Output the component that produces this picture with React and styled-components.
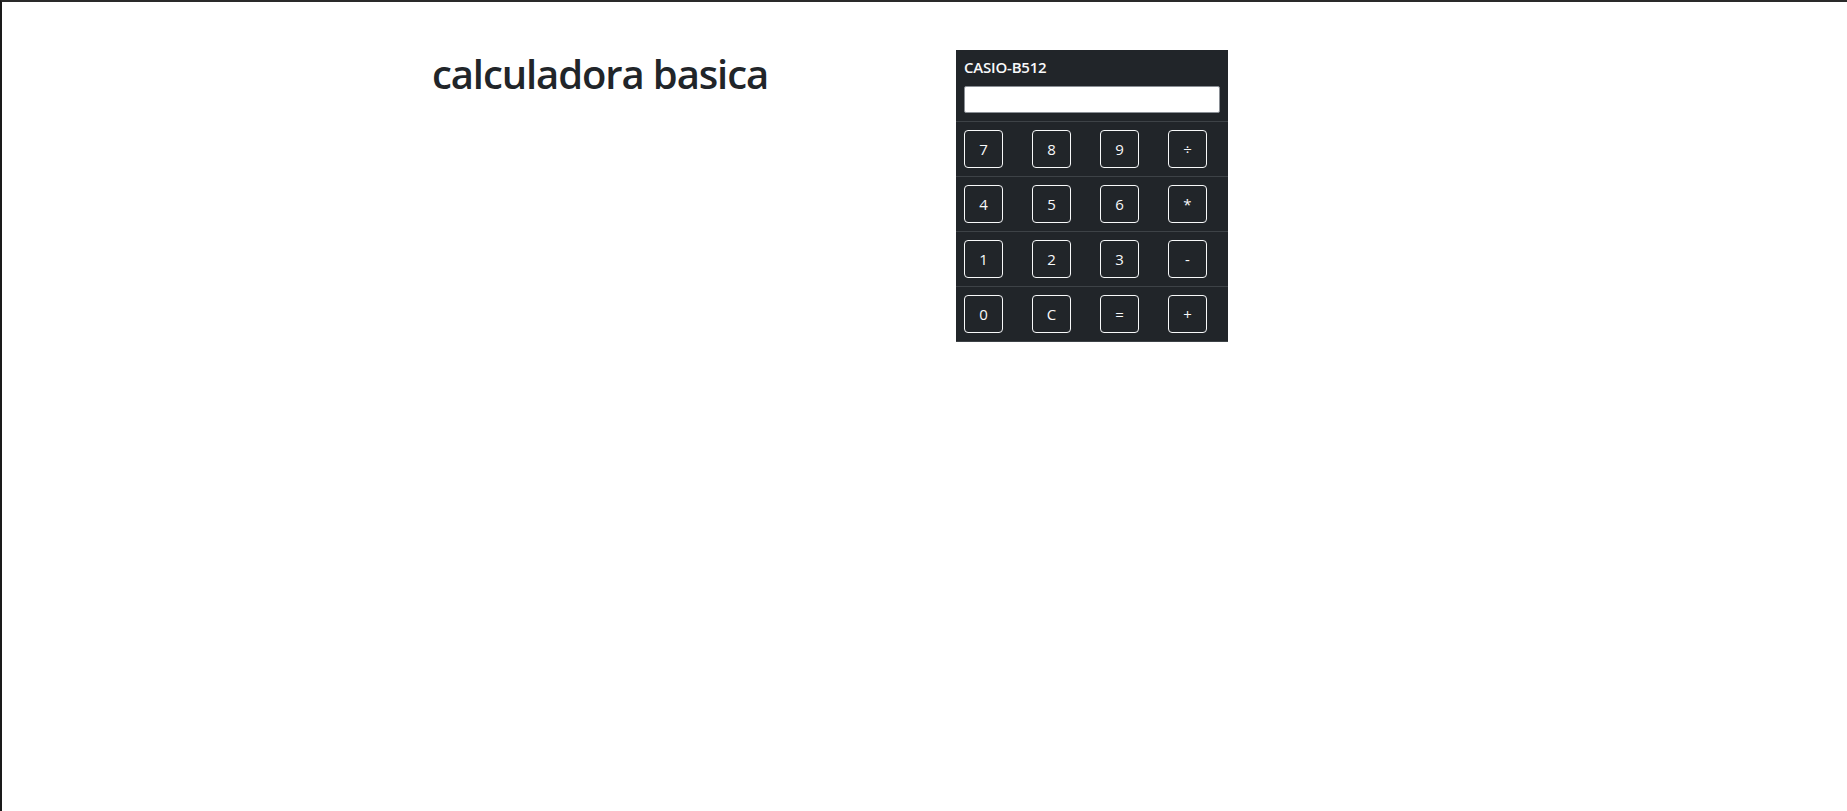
import React from "react";
import styled, { createGlobalStyle } from "styled-components";

const GlobalStyle = createGlobalStyle`
  html, body { margin: 0; padding: 0; background: #ffffff; }
  body { font-family: "Open Sans", "Noto Sans", sans-serif; color: #212529; }
  * { box-sizing: border-box; }
`;

const Frame = styled.div`
  min-height: 100vh;
  border-top: 2px solid #2a2a2a;
  border-left: 2px solid #1a1a1a;
  padding-top: 48px;
`;

const Row = styled.div`
  display: flex;
  align-items: flex-start;
  padding-left: 430px;
`;

const TitleCol = styled.div`
  width: 336px;
  text-align: center;
`;

const Title = styled.h1`
  margin: 0;
  font-size: 40px;
  font-weight: 600;
  line-height: 48px;
  letter-spacing: -1.1px;
  color: #212529;
  white-space: nowrap;
`;

const Card = styled.div`
  margin-left: 188px;
  width: 272px;
  background: #212529;
  color: #f8f9fa;
  border-bottom: 1px solid #3d4246;
`;

const Header = styled.div`
  padding: 8px;
  display: flex;
  flex-direction: column;
  gap: 9px;
`;

const Brand = styled.div`
  font-size: 15px;
  font-weight: 600;
  line-height: 19px;
  letter-spacing: -0.2px;
  color: #f8f9fa;
`;

const Display = styled.input`
  display: block;
  width: 256px;
  height: 27px;
  border: 1px solid #8a8f95;
  border-radius: 2px;
  background: #ffffff;
  font-family: inherit;
  font-size: 14px;
  padding: 2px 6px;
  outline: none;
`;

const KeyRow = styled.div`
  display: grid;
  grid-template-columns: repeat(4, 68px);
  border-top: 1px solid #3d4246;
  padding: 8px 0;
`;

const KeyCell = styled.div`
  padding-left: 8px;
`;

const Key = styled.button`
  width: 39px;
  height: 38px;
  padding: 0;
  background: transparent;
  border: 1px solid #f8f9fa;
  border-radius: 4px;
  color: #f8f9fa;
  font-family: "Open Sans", "Noto Sans", sans-serif;
  font-size: 15px;
  line-height: 1;
  cursor: pointer;
`;

const rows = [
  ["7", "8", "9", "÷"],
  ["4", "5", "6", "*"],
  ["1", "2", "3", "-"],
  ["0", "C", "=", "+"],
];

export default function App() {
  return (
    <>
      <GlobalStyle />
      <Frame>
        <Row>
          <TitleCol>
            <Title>calculadora basica</Title>
          </TitleCol>
          <Card>
            <Header>
              <Brand>CASIO-B512</Brand>
              <Display type="text" readOnly value="" />
            </Header>
            {rows.map((r, i) => (
              <KeyRow key={i}>
                {r.map((k) => (
                  <KeyCell key={k}>
                    <Key type="button">{k}</Key>
                  </KeyCell>
                ))}
              </KeyRow>
            ))}
          </Card>
        </Row>
      </Frame>
    </>
  );
}
